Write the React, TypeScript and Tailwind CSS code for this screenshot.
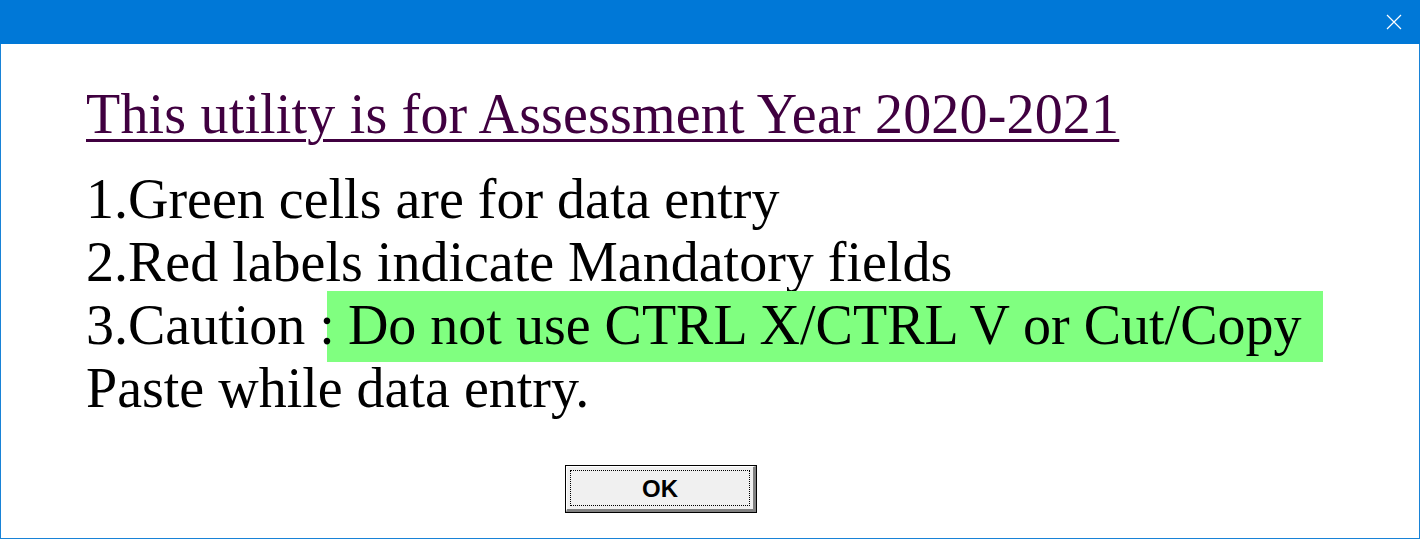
export default function App() {
  return (
    <div className="flex h-[539px] w-[1420px] flex-col overflow-hidden bg-white">
      {/* title bar */}
      <div className="flex h-[44px] shrink-0 items-center justify-end bg-[#0078d7] pr-[18px]">
        <svg width="16" height="16" viewBox="0 0 16 16" className="block">
          <path d="M1 1 L15 15 M15 1 L1 15" stroke="#ffffff" strokeWidth="1.2" fill="none" />
        </svg>
      </div>

      {/* body */}
      <div className="flex flex-1 flex-col border-x border-b border-[#1883d7] pl-[85px] pt-[39px] font-['Liberation_Serif',serif] text-[56px] leading-[63px] text-black">
        <div className="tracking-[0.18px] text-[#400040] underline decoration-[3px] underline-offset-[6px]">
          This utility is for Assessment Year 2020-2021
        </div>
        <div className="mt-[22px]">1.Green cells are for data entry</div>
        <div>2.Red labels indicate Mandatory fields</div>
        <div className="whitespace-nowrap">
          <span className="relative z-10">3.Caution :</span>
          <span className="-mb-[5px] -ml-[8px] -mt-[3px] inline-block w-[996px] bg-[#80ff80] pb-[5px] pl-[21px] pt-[3px]">
            Do not use CTRL X/CTRL V or Cut/Copy
          </span>
        </div>
        <div>Paste while data entry.</div>

        <div className="ml-[479px] mt-[45px]">
          <button
            type="button"
            className="flex h-[48px] w-[192px] border border-black bg-[#f0f0f0] p-0"
          >
            <div className="flex flex-1 border-b-[3px] border-l border-r-[3px] border-t border-b-[#808080] border-l-white border-r-[#808080] border-t-white p-[3px]">
              <div className="flex flex-1 items-center justify-center border border-dotted border-black pt-[2px] font-['Liberation_Sans',Arial,sans-serif] text-[24px] font-bold leading-none">
                OK
              </div>
            </div>
          </button>
        </div>
      </div>
    </div>
  );
}
